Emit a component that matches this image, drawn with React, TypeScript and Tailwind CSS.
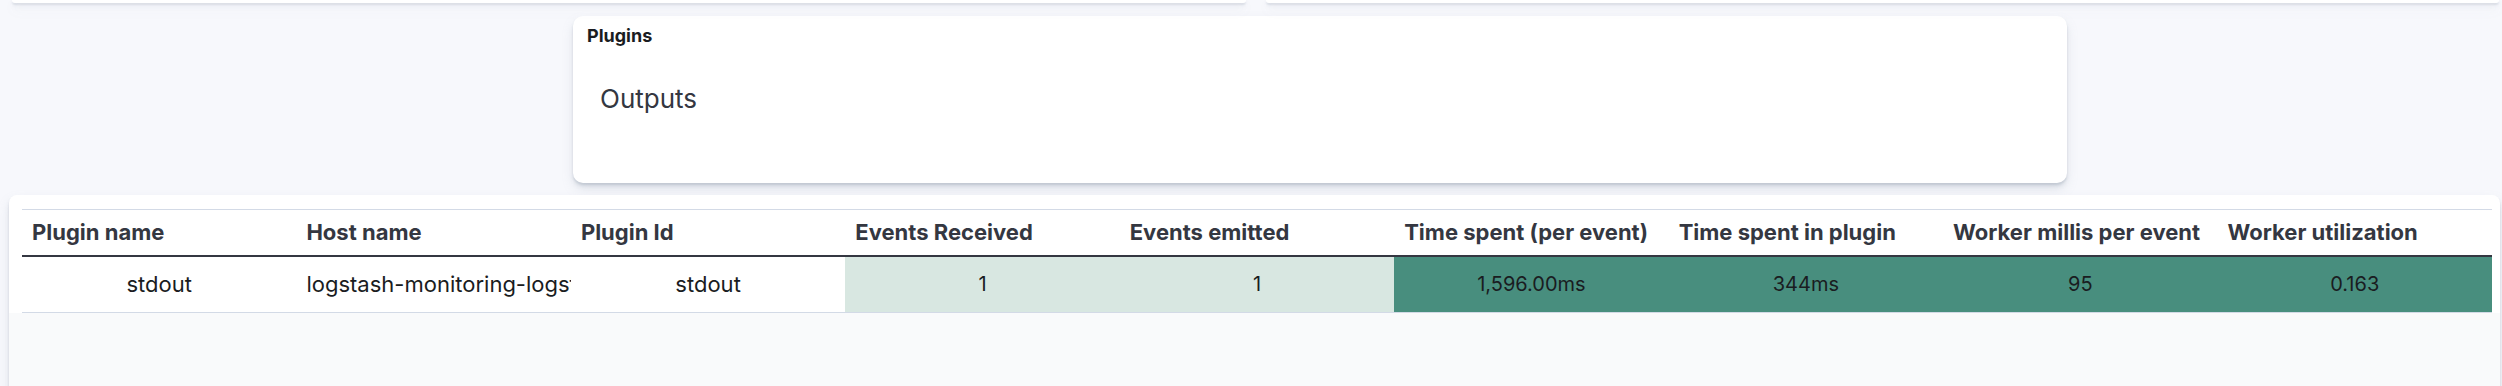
import React from 'react'

const columns = [
  'Plugin name',
  'Host name',
  'Plugin Id',
  'Events Received',
  'Events emitted',
  'Time spent (per event)',
  'Time spent in plugin',
  'Worker millis per event',
  'Worker utilization',
]

const row = [
  { value: 'stdout', tone: 'none', align: 'center', text: true },
  { value: 'logstash-monitoring-logstash-0', tone: 'none', align: 'left', text: true },
  { value: 'stdout', tone: 'none', align: 'center', text: true },
  { value: '1', tone: 'light', align: 'center', text: false },
  { value: '1', tone: 'light', align: 'center', text: false },
  { value: '1,596.00ms', tone: 'dark', align: 'center', text: false },
  { value: '344ms', tone: 'dark', align: 'center', text: false },
  { value: '95', tone: 'dark', align: 'center', text: false },
  { value: '0.163', tone: 'dark', align: 'center', text: false },
]

const cardShadow =
  'shadow-[0_6px_12px_-1px_rgba(152,162,179,0.25),0_4px_4px_-1px_rgba(152,162,179,0.25),0_2px_2px_0_rgba(152,162,179,0.25)]'

export default function App() {
  return (
    <div className="h-[386px] w-[2502px] overflow-hidden bg-[#f7f8fc] font-['Inter',sans-serif] text-[#343741]">
      {/* cards from the section above, only their bottom edge shows */}
      <div className="flex gap-[20px] pl-[12px] pr-[3px]">
        <div className={`h-[3px] flex-1 rounded-b-[6px] bg-white ${cardShadow}`} />
        <div className={`h-[3px] flex-1 rounded-b-[6px] bg-white ${cardShadow}`} />
      </div>

      <div className={`ml-[573px] mt-[13px] h-[167px] w-[1494px] rounded-[10px] bg-white pl-[14px] pt-[8px] ${cardShadow}`}>
        <h3 className="text-[18px] font-bold leading-[24px] text-[#1a1c21]">Plugins</h3>
        <p className="mt-[35px] pl-[13px] text-[26px] leading-[32px] text-[#343741]">Outputs</p>
      </div>

      <div className={`ml-[9px] mt-[12px] h-[220px] w-[2491px] overflow-hidden rounded-t-[8px] bg-white ${cardShadow}`}>
        <div className="pl-[13px] pr-[8px] pt-[14px]">
          <table className="w-full table-fixed border-collapse border-t border-[#d3dae6]">
            <thead>
              <tr className="border-b-2 border-[#343741]">
                {columns.map((c) => (
                  <th
                    key={c}
                    className="h-[46px] overflow-hidden whitespace-nowrap px-[10px] text-left text-[22px] font-bold text-[#343741]"
                  >
                    {c}
                  </th>
                ))}
              </tr>
            </thead>
            <tbody>
              <tr className="border-b border-[#d3dae6]">
                {row.map((cell, i) => (
                  <td
                    key={i}
                    className={`h-[57px] overflow-hidden whitespace-nowrap px-[10px] text-[#1a1c21] ${
                      cell.text ? 'text-[22px]' : 'text-[20px]'
                    } ${cell.align === 'left' ? 'text-left' : 'text-center'} ${
                      cell.tone === 'light' ? 'bg-[#d8e7e1]' : cell.tone === 'dark' ? 'bg-[#488e7e]' : ''
                    }`}
                  >
                    {cell.value}
                  </td>
                ))}
              </tr>
            </tbody>
          </table>
        </div>
        <div className="h-full bg-[#f9fafb]" />
      </div>
    </div>
  )
}
